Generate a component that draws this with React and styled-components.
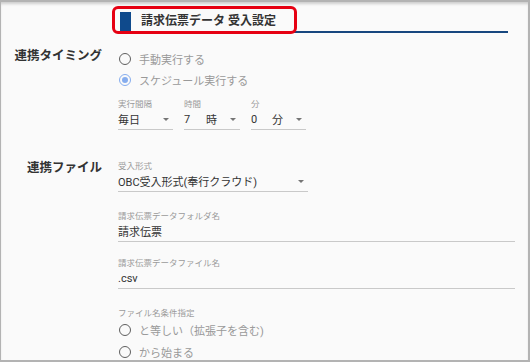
import React from "react";
import styled, { createGlobalStyle } from "styled-components";

const GlobalStyle = createGlobalStyle`
  html, body {
    margin: 0;
    padding: 0;
    background: #ffffff;
  }
  body {
    font-family: Roboto, "Noto Sans CJK JP", sans-serif;
    color: #333;
  }
`;

const Frame = styled.div`
  box-sizing: border-box;
  width: 530px;
  height: 362px;
  overflow: hidden;
  background: #fafafa;
  border: 2px solid #b3b3b3;
  border-left-width: 1px;
  box-shadow: inset 0 3px 3px -1px rgba(0, 0, 0, 0.18);
  padding-top: 10px;
`;

const HeaderRow = styled.div`
  position: relative;
  display: flex;
  align-items: stretch;
  margin-left: 119px;
  margin-right: 20px;
  height: 19px;
  border-bottom: 2px solid #17477f;
`;

const TitleMark = styled.div`
  width: 11px;
  background: #0f4a8c;
`;

const Title = styled.h1`
  margin: 0 0 0 10px;
  font-size: 12px;
  font-weight: 700;
  line-height: 19px;
  color: #333;
`;

/* red annotation box drawn over the heading */
const Highlight = styled.div`
  position: absolute;
  left: -8px;
  top: -6px;
  width: 185px;
  height: 28px;
  box-sizing: border-box;
  border: 3px solid #e60012;
  border-radius: 6px;
`;

const Section = styled.section`
  display: flex;
  margin-top: ${(p) => p.$top}px;
`;

const SectionLabel = styled.div`
  width: 101px;
  flex: none;
  text-align: right;
  font-size: 12.5px;
  font-weight: 700;
  line-height: 16px;
  color: #333;
`;

const Content = styled.div`
  flex: 1;
  margin-left: 16px;
  margin-right: 13px;
  display: flex;
  flex-direction: column;
`;

const RadioRow = styled.label`
  display: flex;
  align-items: center;
  height: ${(p) => p.$h || 21}px;
  font-size: 11px;
  color: #999;
`;

const RadioCircle = styled.span`
  box-sizing: border-box;
  width: 12px;
  height: 12px;
  margin-left: 1px;
  margin-right: 8px;
  border-radius: 50%;
  border: 1.5px solid ${(p) => (p.$checked ? "#86adee" : "#5f5f5f")};
  display: flex;
  align-items: center;
  justify-content: center;

  &::after {
    content: "";
    display: ${(p) => (p.$checked ? "block" : "none")};
    width: 6px;
    height: 6px;
    border-radius: 50%;
    background: #86adee;
  }
`;

const SelectRow = styled.div`
  display: flex;
  gap: 11px;
  margin-top: 8px;
`;

const Field = styled.div`
  width: ${(p) => (p.$w ? `${p.$w}px` : "auto")};
  margin-top: ${(p) => p.$top || 0}px;
`;

const SmallLabel = styled.div`
  font-size: 8.5px;
  line-height: 12px;
  color: #9a9a9a;
`;

const Value = styled.div`
  display: flex;
  align-items: center;
  margin-top: 1px;
  padding-bottom: 2px;
  height: 16px;
  font-size: 11px;
  color: #333;
  border-bottom: 1px solid #c9c9c9;
`;

const Suffix = styled.span`
  margin-left: auto;
  margin-right: 13px;
`;

const Arrow = styled.span`
  margin-left: ${(p) => (p.$auto ? "auto" : "0")};
  margin-right: 4px;
  width: 0;
  height: 0;
  border-left: 3px solid transparent;
  border-right: 3px solid transparent;
  border-top: 3px solid #757575;
`;

function Select({ label, value, suffix, width }) {
  return (
    <Field $w={width}>
      <SmallLabel>{label}</SmallLabel>
      <Value>
        <span>{value}</span>
        {suffix && <Suffix>{suffix}</Suffix>}
        <Arrow $auto={!suffix} />
      </Value>
    </Field>
  );
}

export default function App() {
  return (
    <>
      <GlobalStyle />
      <Frame>
        <HeaderRow>
          <TitleMark />
          <Title>請求伝票データ 受入設定</Title>
          <Highlight />
        </HeaderRow>

        <Section $top={15}>
          <SectionLabel>連携タイミング</SectionLabel>
          <Content>
            <RadioRow>
              <RadioCircle />
              手動実行する
            </RadioRow>
            <RadioRow>
              <RadioCircle $checked />
              スケジュール実行する
            </RadioRow>
            <SelectRow>
              <Select label="実行間隔" value="毎日" width={55} />
              <Select label="時間" value="7" suffix="時" width={56} />
              <Select label="分" value="0" suffix="分" width={55} />
            </SelectRow>
          </Content>
        </Section>

        <Section $top={30}>
          <SectionLabel>連携ファイル</SectionLabel>
          <Content>
            <Select label="受入形式" value="OBC受入形式(奉行クラウド)" width={190} />
            <Field $top={18}>
              <SmallLabel>請求伝票データフォルダ名</SmallLabel>
              <Value>請求伝票</Value>
            </Field>
            <Field $top={15}>
              <SmallLabel>請求伝票データファイル名</SmallLabel>
              <Value>.csv</Value>
            </Field>
            <Field $top={18}>
              <SmallLabel>ファイル名条件指定</SmallLabel>
              <RadioRow $h={22}>
                <RadioCircle />
                と等しい（拡張子を含む)
              </RadioRow>
              <RadioRow $h={22}>
                <RadioCircle />
                から始まる
              </RadioRow>
            </Field>
          </Content>
        </Section>
      </Frame>
    </>
  );
}
